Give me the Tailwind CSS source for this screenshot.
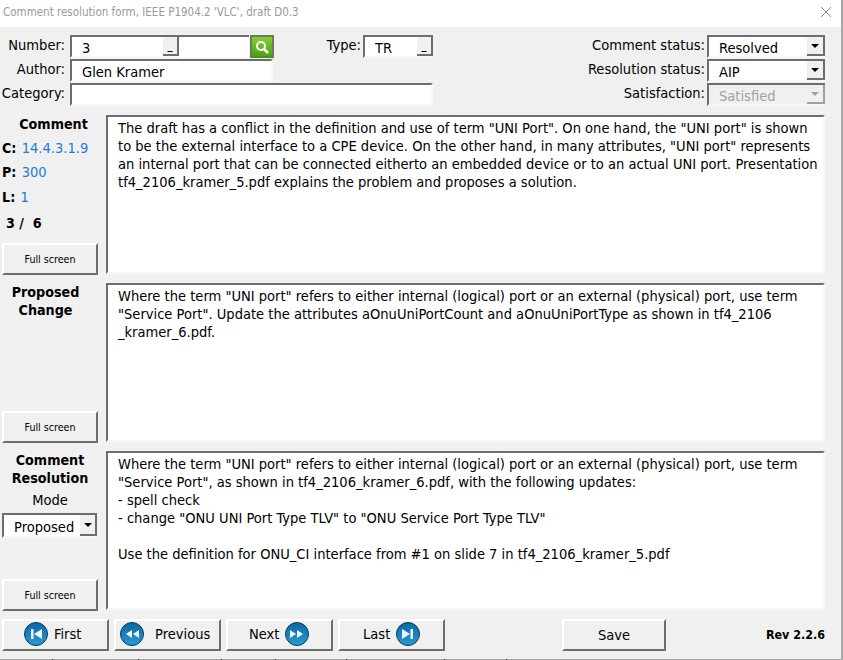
<!DOCTYPE html>
<html lang="en">
<head>
  <meta charset="utf-8" />
  <title>Comment resolution form</title>
  <script src="https://cdn.jsdelivr.net/npm/@tailwindcss/browser@4"></script>
</head>
<body class="w-[843px] h-[660px] overflow-hidden bg-white font-['DejaVu_Sans_Condensed','DejaVu_Sans',sans-serif] [font-stretch:condensed] text-[14.56px] text-black">
  <div class="w-[843px] h-[660px] bg-[#f0f0f0] border-r-2 border-[#a8a8a8] flex flex-col">

    <!-- Title bar -->
    <header class="h-[27px] bg-white flex justify-between pl-[3px] pr-[9px]">
      <span class="text-[11.5px] leading-[24px] text-[#999999]">Comment resolution form, IEEE P1904.2 'VLC', draft D0.3</span>
      <svg class="w-[12px] h-[12px] mt-[6px]" viewBox="0 0 12 12" stroke="#8c8c8c" fill="none"><path d="M1 1 11 11M11 1 1 11"/></svg>
    </header>

    <!-- Top fields -->
    <section class="h-[88px] pt-[8px] flex">
      <div class="w-[70px] flex flex-col items-end gap-[1px] pr-[5px]">
        <div class="h-[23px] leading-[20px]">Number:</div>
        <div class="h-[23px] leading-[20px]">Author:</div>
        <div class="h-[23px] leading-[20px]">Category:</div>
      </div>
      <div class="w-[363px] flex flex-col gap-[1px]">
        <div class="h-[23px] flex justify-between">
          <div class="flex">
            <div class="w-[109px] h-[23px] bg-white border-2 border-[#6d6d6d] border-b-[#f8f8f8] border-r-0 pl-[10px] leading-[22px] flex justify-between">3<span class="w-[16px] h-[19px] bg-[#f0f0f0] border-r-2 border-b-2 border-[#6d6d6d] text-[11px] font-bold leading-[18px] text-center">_</span></div>
            <div class="w-[70px] h-[23px] bg-white border-t-2 border-[#6d6d6d]"></div>
            <div class="ml-[1px] w-[24px] h-[23px] bg-gradient-to-b from-[#84d033] to-[#46a512] border-2 border-[#6d7a60] border-b-[#4f8f20] flex items-center justify-center">
              <svg class="w-[14px] h-[14px]" viewBox="0 0 14 14" fill="none" stroke="white"><circle cx="6" cy="6" r="4" stroke-width="2"/><path d="M9 9 13 13" stroke-width="2.5"/></svg>
            </div>
          </div>
          <div class="flex">
            <span class="leading-[20px] mr-[2px]">Type:</span>
            <div class="w-[70px] h-[23px] bg-white border-2 border-[#6d6d6d] border-b-[#f8f8f8] border-r-0 pl-[10px] leading-[22px] flex justify-between">TR<span class="w-[16px] h-[19px] bg-[#f0f0f0] border-r-2 border-b-2 border-[#6d6d6d] text-[11px] font-bold leading-[18px] text-center">_</span></div>
          </div>
        </div>
        <div class="w-[203px] h-[23px] bg-white border-2 border-[#6d6d6d] border-r-[#f8f8f8] border-b-[#f8f8f8] pl-[10px] leading-[22px]">Glen Kramer</div>
        <div class="h-[23px] bg-white border-2 border-[#6d6d6d] border-r-[#f8f8f8] border-b-[#f8f8f8]"></div>
      </div>
      <div class="ml-auto mr-[16px] flex flex-col gap-[1px] items-end">
        <div class="h-[23px] flex">
          <span class="leading-[20px] mr-[2px]">Comment status:</span>
          <div class="w-[118px] h-[23px] bg-white border-2 border-[#6d6d6d] border-b-[#f8f8f8] border-r-0 pl-[10px] leading-[22px] flex justify-between">Resolved<span class="w-[18px] h-[19px] bg-[#f0f0f0] border-r-2 border-b-2 border-[#6d6d6d] flex items-center justify-center"><span class="border-x-[4px] border-t-[4px] border-x-transparent border-t-black"></span></span></div>
        </div>
        <div class="h-[23px] flex">
          <span class="leading-[20px] mr-[2px]">Resolution status:</span>
          <div class="w-[118px] h-[23px] bg-white border-2 border-[#6d6d6d] border-b-[#f8f8f8] border-r-0 pl-[10px] leading-[22px] flex justify-between">AIP<span class="w-[18px] h-[19px] bg-[#f0f0f0] border-r-2 border-b-2 border-[#6d6d6d] flex items-center justify-center"><span class="border-x-[4px] border-t-[4px] border-x-transparent border-t-black"></span></span></div>
        </div>
        <div class="h-[23px] flex">
          <span class="leading-[20px] mr-[2px]">Satisfaction:</span>
          <div class="w-[118px] h-[23px] bg-[#f0f0f0] border-2 border-[#6d6d6d] border-b-[#f8f8f8] border-r-0 pl-[10px] leading-[22px] text-[#a0a0a0] flex justify-between">Satisfied<span class="w-[18px] h-[19px] bg-[#f0f0f0] border-r-2 border-b-2 border-[#a0a0a0] flex items-center justify-center"><span class="border-x-[4px] border-t-[4px] border-x-transparent border-t-[#a0a0a0]"></span></span></div>
        </div>
      </div>
    </section>

    <!-- Comment -->
    <section class="h-[168px] flex">
      <div class="w-[106px] pl-[2px] pr-[8px] flex flex-col">
        <div class="font-bold text-[14.2px] text-center leading-[18px] pl-[7px]">Comment</div>
        <div class="mt-[6px] leading-[18px]"><b class="font-bold text-[14.2px]">C:</b> <span class="ml-[1px] text-[#1c7cd6]">14.4.3.1.9</span></div>
        <div class="mt-[6px] leading-[18px]"><b class="font-bold text-[14.2px]">P:</b> <span class="ml-[1px] text-[#1c7cd6]">300</span></div>
        <div class="mt-[7px] leading-[18px]"><b class="font-bold text-[14.2px]">L:</b> <span class="ml-[1px] text-[#1c7cd6]">1</span></div>
        <div class="mt-[8px] pl-[4px] font-bold text-[14.2px] leading-[18px] whitespace-pre">3 /  6</div>
        <button class="mt-auto mb-[8px] h-[32px] pt-[2px] bg-[#f0f0f0] border-2 border-white border-r-[#6d6d6d] border-b-[#6d6d6d] text-[10.6px]">Full screen</button>
      </div>
      <div class="w-[719px] h-[159px] bg-white border-2 border-[#6d6d6d] border-r-[#f8f8f8] border-b-[#f8f8f8] pl-[10px] pr-[4px] pt-[2px] leading-[18px]">The draft has a conflict in the definition and use of term "UNI Port". On one hand, the "UNI port" is shown to be the external interface to a CPE device. On the other hand, in many attributes, "UNI port" represents an internal port that can be connected eitherto an embedded device or to an actual UNI port. Presentation tf4_2106_kramer_5.pdf explains the problem and proposes a solution.</div>
    </section>

    <!-- Proposed change -->
    <section class="h-[168px] flex">
      <div class="w-[106px] pl-[2px] pr-[8px] flex flex-col">
        <div class="font-bold text-[14.2px] text-center leading-[18px] pr-[9px]">Proposed<br>Change</div>
        <button class="mt-auto mb-[8px] h-[32px] pt-[2px] bg-[#f0f0f0] border-2 border-white border-r-[#6d6d6d] border-b-[#6d6d6d] text-[10.6px]">Full screen</button>
      </div>
      <div class="w-[719px] h-[159px] bg-white border-2 border-[#6d6d6d] border-r-[#f8f8f8] border-b-[#f8f8f8] pl-[10px] pr-[4px] pt-[2px] leading-[18px]">Where the term "UNI port" refers to either internal (logical) port or an external (physical) port, use term "Service Port". Update the attributes aOnuUniPortCount and aOnuUniPortType as shown in tf4_2106<br>_kramer_6.pdf.</div>
    </section>

    <!-- Comment resolution -->
    <section class="h-[168px] flex">
      <div class="w-[106px] pl-[2px] pr-[8px] flex flex-col">
        <div class="font-bold text-[14.2px] text-center leading-[18px]">Comment<br>Resolution</div>
        <div class="text-center leading-[18px] mt-[4px]">Mode</div>
        <div class="w-[95px] h-[25px] mt-[4px] bg-white border-2 border-[#6d6d6d] border-b-[#f8f8f8] border-r-0 pl-[10px] leading-[24px] flex justify-between">Proposed<span class="w-[17px] h-[21px] bg-[#f0f0f0] border-r-2 border-b-2 border-[#6d6d6d] flex items-center justify-center"><span class="border-x-[4px] border-t-[4px] border-x-transparent border-t-black"></span></span></div>
        <button class="mt-auto mb-[8px] h-[32px] pt-[2px] bg-[#f0f0f0] border-2 border-white border-r-[#6d6d6d] border-b-[#6d6d6d] text-[10.6px]">Full screen</button>
      </div>
      <div class="w-[719px] h-[159px] bg-white border-2 border-[#6d6d6d] border-r-[#f8f8f8] border-b-[#f8f8f8] pl-[10px] pr-[4px] pt-[2px] leading-[18px]">Where the term "UNI port" refers to either internal (logical) port or an external (physical) port, use term "Service Port", as shown in tf4_2106_kramer_6.pdf, with the following updates:<br>- spell check<br>- change "ONU UNI Port Type TLV" to "ONU Service Port Type TLV"<br><br>Use the definition for ONU_CI interface from #1 on slide 7 in tf4_2106_kramer_5.pdf</div>
    </section>

    <!-- Nav buttons -->
    <footer class="flex items-center pl-[2px] h-[32px] gap-[5px]">
      <button class="w-[107px] h-[32px] pl-[20px] pb-[2px] bg-[#f0f0f0] border-2 border-white border-r-[#6d6d6d] border-b-[#6d6d6d] flex items-center gap-[6px]">
        <svg class="w-[24px] h-[24px]" viewBox="0 0 24 24"><defs><linearGradient id="navblue" x1="0" y1="0" x2="0" y2="1"><stop offset="0" stop-color="#0d66a2"/><stop offset="1" stop-color="#2a9bd2"/></linearGradient></defs><circle cx="12" cy="12" r="11.5" fill="url(#navblue)" stroke="#063b63"/><path d="M7 7h2.5v10H7zM18 7v10l-8-5z" fill="#eef8fd"/></svg>
        First
      </button>
      <button class="w-[107px] h-[32px] pl-[4px] pb-[2px] bg-[#f0f0f0] border-2 border-white border-r-[#6d6d6d] border-b-[#6d6d6d] flex items-center gap-[11px]">
        <svg class="w-[24px] h-[24px]" viewBox="0 0 24 24"><circle cx="12" cy="12" r="11.5" fill="url(#navblue)" stroke="#063b63"/><path d="M12 8v8l-6-4zM19 8v8l-6-4z" fill="#eef8fd"/></svg>
        Previous
      </button>
      <button class="w-[107px] h-[32px] pl-[21px] pb-[2px] bg-[#f0f0f0] border-2 border-white border-r-[#6d6d6d] border-b-[#6d6d6d] flex items-center gap-[6px]">
        Next
        <svg class="w-[24px] h-[24px]" viewBox="0 0 24 24"><circle cx="12" cy="12" r="11.5" fill="url(#navblue)" stroke="#063b63"/><path d="M5 8v8l6-4zM12 8v8l6-4z" fill="#eef8fd"/></svg>
      </button>
      <button class="w-[107px] h-[32px] pl-[23px] pb-[2px] bg-[#f0f0f0] border-2 border-white border-r-[#6d6d6d] border-b-[#6d6d6d] flex items-center gap-[6px]">
        Last
        <svg class="w-[24px] h-[24px]" viewBox="0 0 24 24"><circle cx="12" cy="12" r="11.5" fill="url(#navblue)" stroke="#063b63"/><path d="M6 7v10l8-5zM14.5 7H17v10h-2.5z" fill="#eef8fd"/></svg>
      </button>
      <button class="ml-[112px] w-[104px] h-[32px] bg-[#f0f0f0] border-2 border-white border-r-[#6d6d6d] border-b-[#6d6d6d]">Save</button>
      <span class="ml-auto mr-[16px] text-[12.4px] font-bold">Rev 2.2.6</span>
    </footer>

    <!-- Bottom edge of the window -->
    <div class="mt-auto h-[1px] bg-[#a8a8a8] flex">
      <span class="ml-[52px] w-[1px] bg-[#222222]"></span>
      <span class="ml-[85px] w-[1px] bg-[#222222]"></span>
      <span class="ml-[82px] w-[1px] bg-[#222222]"></span>
      <span class="ml-[53px] w-[1px] bg-[#222222]"></span>
      <span class="ml-[70px] w-[1px] bg-[#222222]"></span>
      <span class="ml-[97px] w-[1px] bg-[#222222]"></span>
      <span class="ml-[61px] w-[1px] bg-[#222222]"></span>
    </div>
  </div>
</body>
</html>
